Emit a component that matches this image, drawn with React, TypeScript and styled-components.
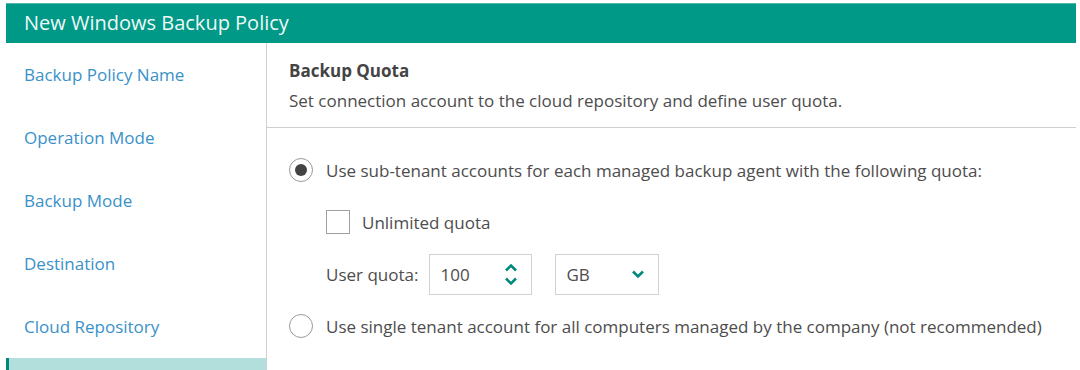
import React from 'react';
import styled, { createGlobalStyle } from 'styled-components';

const GlobalStyle = createGlobalStyle`
  html, body {
    margin: 0;
    padding: 0;
    background: #fff;
  }
  body {
    font-family: "Open Sans", "Noto Sans", sans-serif;
    color: #4d4d4d;
  }
`;

const navItems = [
  'Backup Policy Name',
  'Operation Mode',
  'Backup Mode',
  'Destination',
  'Cloud Repository',
  'Backup Quota',
];

const App: React.FC = () => {
  return (
    <>
      <GlobalStyle />
      <Wizard>
        <TitleBar>New Windows Backup Policy</TitleBar>
        <Body>
          <Nav>
            {navItems.map((item, i) => (
              <NavItem key={item} $active={i === navItems.length - 1}>
                {item}
              </NavItem>
            ))}
          </Nav>
          <Content>
            <StepHeader>
              <StepTitle>Backup Quota</StepTitle>
              <StepDesc>Set connection account to the cloud repository and define user quota.</StepDesc>
            </StepHeader>
            <Options>
              <Row>
                <Radio $checked />
                <Label>Use sub-tenant accounts for each managed backup agent with the following quota:</Label>
              </Row>
              <Row $indent>
                <Checkbox />
                <Label>Unlimited quota</Label>
              </Row>
              <Row $indent>
                <FieldLabel>User quota:</FieldLabel>
                <Field $width={103}>
                  <span>100</span>
                  <Spinner>
                    <svg width="14" height="9" viewBox="0 0 14 9">
                      <path d="M2 7.5 L7 2.5 L12 7.5" fill="none" stroke="#00897b" strokeWidth="2.6" />
                    </svg>
                    <svg width="14" height="9" viewBox="0 0 14 9">
                      <path d="M2 1.5 L7 6.5 L12 1.5" fill="none" stroke="#00897b" strokeWidth="2.6" />
                    </svg>
                  </Spinner>
                </Field>
                <Field $width={104}>
                  <span>GB</span>
                  <svg width="14" height="9" viewBox="0 0 14 9">
                    <path d="M2 1.5 L7 6.5 L12 1.5" fill="none" stroke="#00897b" strokeWidth="2.6" />
                  </svg>
                </Field>
              </Row>
              <Row>
                <Radio />
                <Label>Use single tenant account for all computers managed by the company (not recommended)</Label>
              </Row>
            </Options>
          </Content>
        </Body>
      </Wizard>
    </>
  );
};

const Wizard = styled.div`
  margin: 3px 4px 0 6px;
  height: 367px;
  display: flex;
  flex-direction: column;
  overflow: hidden;
`;

const TitleBar = styled.div`
  height: 40px;
  flex-shrink: 0;
  background: #009886;
  border-top: 1px solid #4fb8ab;
  box-sizing: border-box;
  color: #eef8f6;
  font-size: 20px;
  line-height: 37px;
  padding-left: 18px;
`;

const Body = styled.div`
  flex: 1;
  display: flex;
  min-height: 0;
`;

const Nav = styled.div`
  width: 260px;
  flex-shrink: 0;
  border-right: 1px solid #d0d0d0;
  display: flex;
  flex-direction: column;
`;

const NavItem = styled.div<{ $active?: boolean }>`
  height: 63px;
  flex-shrink: 0;
  box-sizing: border-box;
  display: flex;
  align-items: center;
  padding-left: ${p => (p.$active ? '15px' : '18px')};
  font-size: 17px;
  color: #3a91c9;
  background: ${p => (p.$active ? '#b2dfdb' : 'transparent')};
  border-left: ${p => (p.$active ? '3px solid #00897b' : 'none')};
`;

const Content = styled.div`
  flex: 1;
  display: flex;
  flex-direction: column;
`;

const StepHeader = styled.div`
  padding: 18px 22px 16px;
  border-bottom: 1px solid #cfcfcf;
`;

const StepTitle = styled.div`
  font-size: 17px;
  font-weight: 700;
  line-height: 20px;
  color: #444;
  margin-bottom: 10px;
`;

const StepDesc = styled.div`
  font-size: 17px;
  line-height: 20px;
  color: #4d4d4d;
`;

const Options = styled.div`
  padding: 22px 22px 0;
  display: flex;
  flex-direction: column;
  gap: 12px;
`;

const Row = styled.div<{ $indent?: boolean }>`
  height: 40px;
  display: flex;
  align-items: center;
  padding-left: ${p => (p.$indent ? '37px' : '0')};
`;

const Radio = styled.span<{ $checked?: boolean }>`
  width: 24px;
  height: 24px;
  box-sizing: border-box;
  border-radius: 50%;
  border: 1.5px solid #9a9a9a;
  flex-shrink: 0;
  margin-right: 13px;
  display: flex;
  align-items: center;
  justify-content: center;

  &::after {
    content: '';
    width: 12px;
    height: 12px;
    border-radius: 50%;
    background: #444;
    display: ${p => (p.$checked ? 'block' : 'none')};
  }
`;

const Checkbox = styled.span`
  width: 24px;
  height: 24px;
  box-sizing: border-box;
  border: 1.5px solid #a0a0a0;
  flex-shrink: 0;
  margin-right: 12px;
`;

const Label = styled.span`
  font-size: 17px;
  color: #4d4d4d;
  white-space: nowrap;
`;

const FieldLabel = styled(Label)`
  margin-right: 11px;
`;

const Field = styled.div<{ $width: number }>`
  width: ${p => p.$width}px;
  height: 41px;
  box-sizing: border-box;
  border: 1.5px solid #d2d2d2;
  display: flex;
  align-items: center;
  justify-content: space-between;
  padding: 0 13px 0 10px;
  margin-right: 23px;
  font-size: 17px;
  color: #4d4d4d;
`;

const Spinner = styled.div`
  display: flex;
  flex-direction: column;
  gap: 5px;
  margin-top: 1px;
`;

export default App;
